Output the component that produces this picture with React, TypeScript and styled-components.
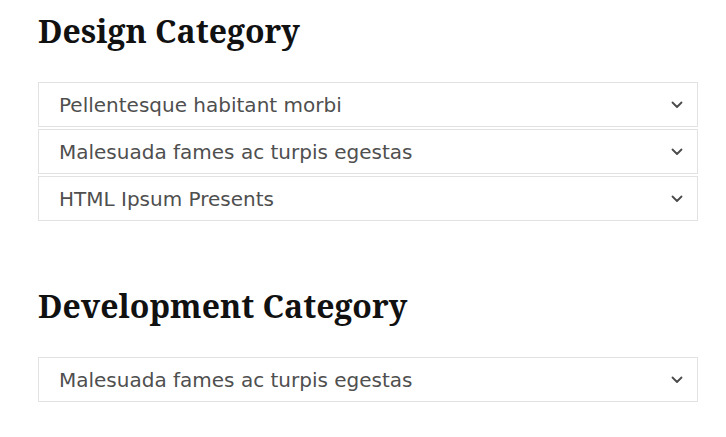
import React from 'react'
import styled, { createGlobalStyle } from 'styled-components'

const GlobalStyle = createGlobalStyle`
  body {
    margin: 0;
    background: #fff;
    font-family: 'DejaVu Sans', sans-serif;
  }
`

const Page = styled.div`
  padding: 8px 28px 0 38px;
`

const Section = styled.section`
  margin-bottom: 62px;

  &:last-child {
    margin-bottom: 0;
  }
`

const Heading = styled.h2`
  margin: 0 0 28px;
  font-family: 'Noto Serif', 'DejaVu Serif', serif;
  font-weight: 700;
  font-size: 32px;
  line-height: 46px;
  color: #111;
`

const List = styled.div`
  display: flex;
  flex-direction: column;
  gap: 2px;
`

const Item = styled.button`
  display: flex;
  align-items: center;
  justify-content: space-between;
  height: 45px;
  padding: 0 14px 0 20px;
  border: 1px solid #e2e2e2;
  background: #fff;
  font-family: 'DejaVu Sans', sans-serif;
  font-size: 20px;
  color: #4f4f4f;
  text-align: left;
  cursor: pointer;
`

const Chevron = () => (
  <svg width="12" height="8" viewBox="0 0 12 8" fill="none">
    <path d="M1.5 1.5 6 6l4.5-4.5" stroke="#4a4a4a" strokeWidth="1.8" strokeLinecap="round" strokeLinejoin="round" />
  </svg>
)

const categories = [
  {
    title: 'Design Category',
    items: ['Pellentesque habitant morbi', 'Malesuada fames ac turpis egestas', 'HTML Ipsum Presents'],
  },
  {
    title: 'Development Category',
    items: ['Malesuada fames ac turpis egestas'],
  },
]

export default function App() {
  return (
    <>
      <GlobalStyle />
      <Page>
        {categories.map((cat) => (
          <Section key={cat.title}>
            <Heading>{cat.title}</Heading>
            <List>
              {cat.items.map((item, i) => (
                <Item key={i}>
                  {item}
                  <Chevron />
                </Item>
              ))}
            </List>
          </Section>
        ))}
      </Page>
    </>
  )
}
